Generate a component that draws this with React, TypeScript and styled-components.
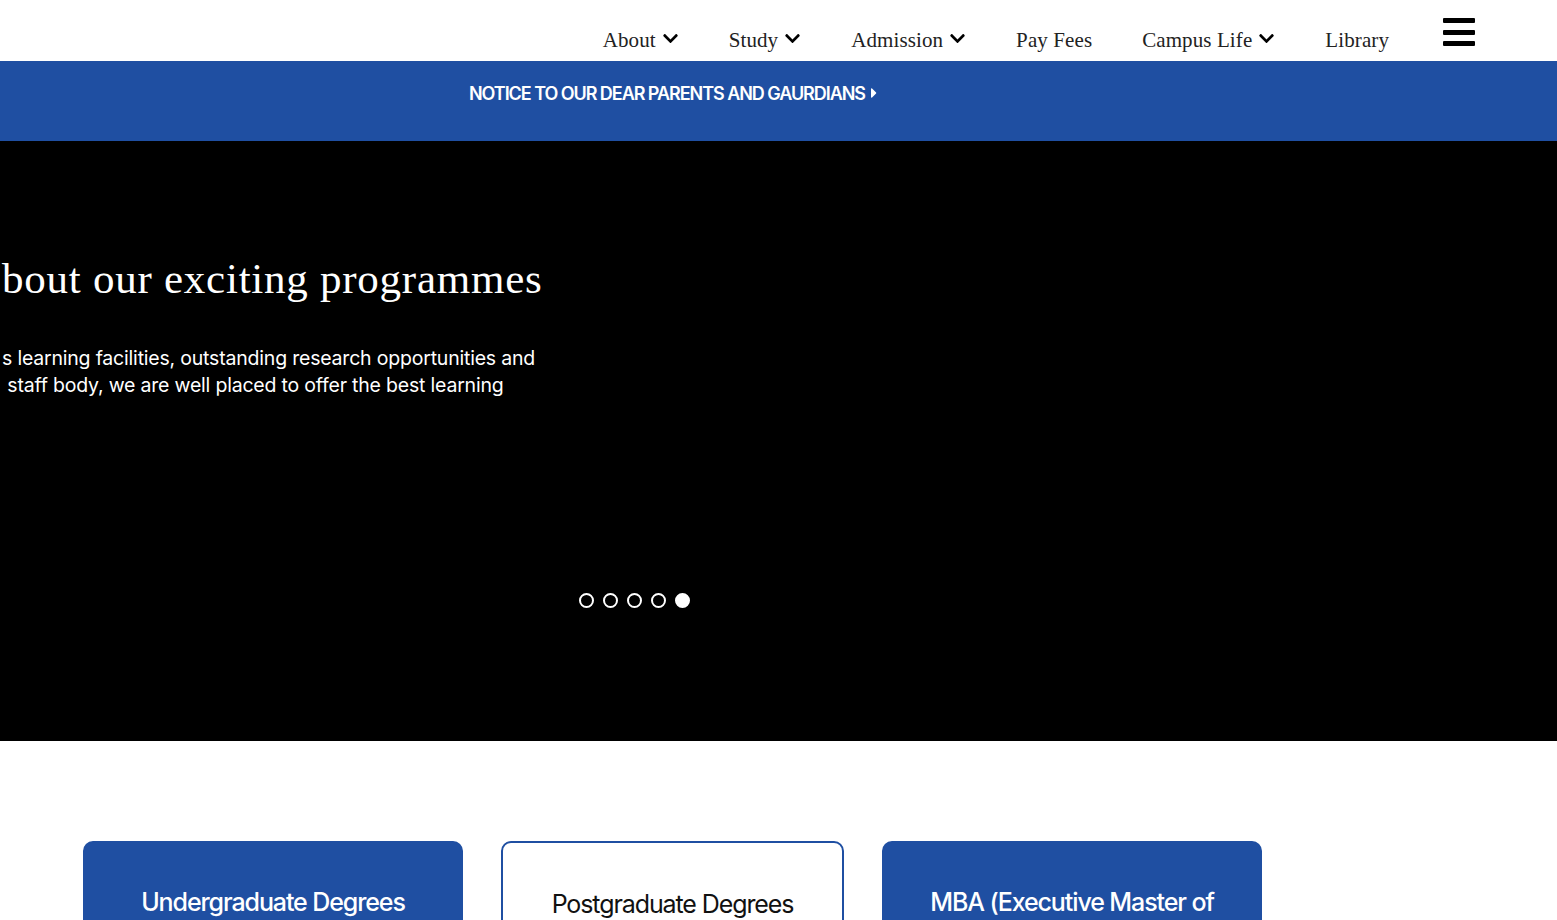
import React from "react";
import styled, { createGlobalStyle } from "styled-components";
import { FaChevronDown, FaCaretRight } from "react-icons/fa";

const BLUE = "#1f4fa2";

const GlobalStyle = createGlobalStyle`
  html, body {
    margin: 0;
    padding: 0;
    background: #fff;
    overflow-x: hidden;
  }
  * {
    box-sizing: border-box;
  }
`;

const Header = styled.header`
  height: 61px;
  display: flex;
  justify-content: flex-end;
  align-items: flex-end;
  padding: 0 82px 8px 0;
  background: #fff;
`;

const Nav = styled.nav`
  display: flex;
  align-items: flex-end;
  gap: 50px;
`;

const NavItem = styled.a`
  display: flex;
  align-items: center;
  gap: 6px;
  font-family: "Liberation Serif", "DejaVu Serif", serif;
  font-size: 21px;
  color: #222;
  text-decoration: none;
  letter-spacing: 0.1px;

  svg {
    color: #000;
    margin-top: -4px;
  }
`;

const Burger = styled.button`
  width: 32px;
  height: 28px;
  margin: 0 0 7px 4px;
  padding: 0;
  border: 0;
  background: transparent;
  display: flex;
  flex-direction: column;
  justify-content: space-between;

  span {
    display: block;
    height: 5px;
    background: #000;
    border-radius: 1px;
  }
`;

const NoticeBar = styled.div`
  height: 80px;
  background: ${BLUE};
  display: flex;
  align-items: center;
  padding-left: 469px;
`;

const NoticeLink = styled.a`
  display: flex;
  align-items: center;
  gap: 1px;
  color: #fff;
  font-family: Inter, "Liberation Sans", sans-serif;
  font-weight: 600;
  font-size: 18px;
  letter-spacing: -1.05px;
  text-decoration: none;
  margin-top: -16px;
`;

const Hero = styled.section`
  height: 600px;
  background: #000;
  overflow: hidden;
  display: flex;
  flex-direction: column;
`;

const Slide = styled.div`
  flex: 1;
  padding: 110px 0 0 2px;
  color: #fff;
`;

const HeroTitle = styled.h1`
  margin: 0;
  font-family: "Liberation Serif", "DejaVu Serif", serif;
  font-weight: 400;
  font-size: 43px;
  line-height: 56px;
  letter-spacing: 0.75px;
`;

const HeroText = styled.p`
  margin: 38px 0 0;
  width: 560px;
  font-family: Inter, "Liberation Sans", sans-serif;
  font-size: 19.5px;
  line-height: 27px;
  letter-spacing: -0.2px;
  white-space: pre;
`;

const Dots = styled.div`
  display: flex;
  gap: 9px;
  padding: 0 0 133px 579px;
`;

const Dot = styled.span<{ $active?: boolean }>`
  width: 15px;
  height: 15px;
  border-radius: 50%;
  border: 2px solid #fff;
  background: ${(p) => (p.$active ? "#fff" : "transparent")};
`;

const Programmes = styled.section`
  display: flex;
  gap: 38px;
  padding: 100px 0 0 83px;
`;

const Card = styled.div<{ $outline?: boolean; $w: number }>`
  width: ${(p) => p.$w}px;
  height: 200px;
  border-radius: 10px;
  background: ${(p) => (p.$outline ? "#fff" : BLUE)};
  border: 2px solid ${BLUE};
  color: ${(p) => (p.$outline ? "#111" : "#fff")};
  font-family: Inter, "Liberation Sans", sans-serif;
  font-weight: ${(p) => (p.$outline ? 400 : 500)};
  font-size: 25px;
  letter-spacing: -1.1px;
  text-align: center;
  padding: ${(p) => (p.$outline ? "46px" : "44px")} 20px 0;
`;

const navItems = [
  { label: "About", menu: true },
  { label: "Study", menu: true },
  { label: "Admission", menu: true },
  { label: "Pay Fees", menu: false },
  { label: "Campus Life", menu: true },
  { label: "Library", menu: false },
];

export default function App() {
  return (
    <>
      <GlobalStyle />
      <Header>
        <Nav>
          {navItems.map((item) => (
            <NavItem key={item.label} href="#">
              {item.label}
              {item.menu && <FaChevronDown size={17} />}
            </NavItem>
          ))}
          <Burger aria-label="Menu">
            <span />
            <span />
            <span />
          </Burger>
        </Nav>
      </Header>
      <NoticeBar>
        <NoticeLink href="#">
          NOTICE TO OUR DEAR PARENTS AND GAURDIANS
          <FaCaretRight size={16} />
        </NoticeLink>
      </NoticeBar>
      <Hero>
        <Slide>
          <HeroTitle>bout our exciting programmes</HeroTitle>
          <HeroText>
            {"s learning facilities, outstanding research opportunities and\n staff body, we are well placed to offer the best learning"}
          </HeroText>
        </Slide>
        <Dots>
          <Dot />
          <Dot />
          <Dot />
          <Dot />
          <Dot $active />
        </Dots>
      </Hero>
      <Programmes>
        <Card $w={380}>Undergraduate Degrees</Card>
        <Card $w={343} $outline>
          Postgraduate Degrees
        </Card>
        <Card $w={380}>MBA (Executive Master of Business Administration)</Card>
      </Programmes>
    </>
  );
}
